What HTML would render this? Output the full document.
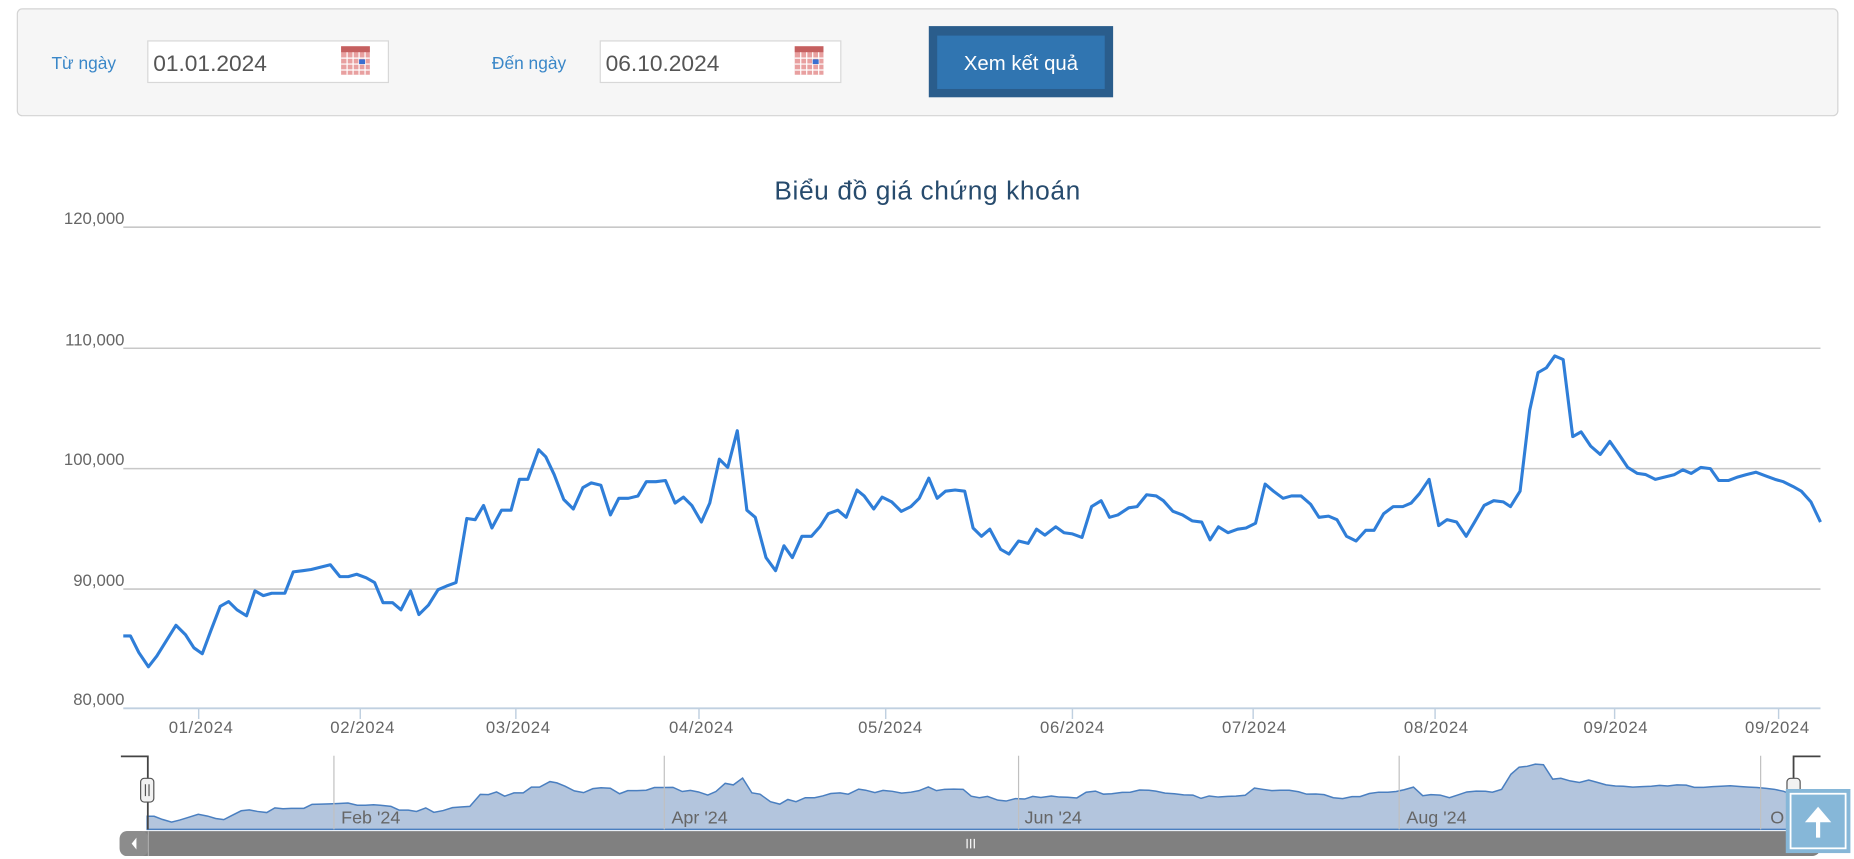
<!DOCTYPE html>
<html><head><meta charset="utf-8"><style>
html,body{margin:0;padding:0;background:#fff;width:1854px;height:859px;overflow:hidden}
svg{display:block}
text{font-family:"Liberation Sans","DejaVu Sans",sans-serif}
</style></head><body>
<svg width="1854" height="859" viewBox="0 0 1549 724" preserveAspectRatio="none" xmlns="http://www.w3.org/2000/svg">
<!-- form panel -->
<rect x="14.5" y="7.5" width="1521" height="90" rx="4" fill="#f6f6f6" stroke="#d4d4d4"/>
<text x="43" y="58" font-size="14.5" fill="#3a87c8">Từ ngày</text>
<rect x="123.5" y="34.5" width="201" height="35" fill="#fff" stroke="#d8d8d8"/>
<text x="128" y="60" font-size="19" fill="#555">01.01.2024</text>
<g transform="translate(285,39)"><rect width="24" height="24" fill="#e8a0a0"/><rect width="24" height="5" fill="#c56060"/>
<path d="M0 10H24M0 15H24M0 20H24M5 5V24M10 5V24M15 5V24M20 5V24" stroke="#fff" stroke-width="1"/><rect x="15" y="11" width="5" height="4" fill="#3a6fd0"/></g>
<text x="411" y="58" font-size="14.5" fill="#3a87c8">Đến ngày</text>
<rect x="501.5" y="34.5" width="201" height="35" fill="#fff" stroke="#d8d8d8"/>
<text x="506" y="60" font-size="19" fill="#555">06.10.2024</text>
<g transform="translate(664,39)"><rect width="24" height="24" fill="#e8a0a0"/><rect width="24" height="5" fill="#c56060"/>
<path d="M0 10H24M0 15H24M0 20H24M5 5V24M10 5V24M15 5V24M20 5V24" stroke="#fff" stroke-width="1"/><rect x="15" y="11" width="5" height="4" fill="#3a6fd0"/></g>
<rect x="776" y="22" width="154" height="60" fill="#2a5d8c"/>
<rect x="783" y="30" width="140" height="45" fill="#3075b1"/>
<text x="853" y="59" font-size="17" fill="#fff" text-anchor="middle">Xem kết quả</text>

<!-- title -->
<text x="775" y="168" font-size="22" fill="#274b6d" text-anchor="middle" letter-spacing="0.5">Biểu đồ giá chứng khoán</text>

<!-- grid -->
<g stroke="#c8c8c8" stroke-width="1.3">
<path d="M103 191.5H1521M103 293.5H1521M103 395H1521M103 496.5H1521"/>
</g>
<path d="M103 597H1521" stroke="#c0d0e0" stroke-width="1.5"/>
<g stroke="#c0d0e0" stroke-width="1.2"><path d="M166 597v9M301 597v9M431 597v9M584 597v9M740 597v9M896 597v9M1047 597v9M1199 597v9M1349 597v9M1486 597v9"/></g>
<g font-size="14" fill="#666" text-anchor="end">
<text x="104" y="189">120,000</text><text x="104" y="291">110,000</text><text x="104" y="392">100,000</text><text x="104" y="494">90,000</text><text x="104" y="594">80,000</text>
</g>
<g font-size="14" fill="#666" text-anchor="middle" letter-spacing="0.5">
<text x="168" y="618">01/2024</text><text x="303" y="618">02/2024</text><text x="433" y="618">03/2024</text><text x="586" y="618">04/2024</text><text x="744" y="618">05/2024</text><text x="896" y="618">06/2024</text><text x="1048" y="618">07/2024</text><text x="1200" y="618">08/2024</text><text x="1350" y="618">09/2024</text><text x="1485" y="618">09/2024</text>
</g>

<polyline fill="none" stroke="#2f7ed8" stroke-width="2.6" stroke-linejoin="round" points="103,536 109,536 116,550 124,562 131,553 139,540 147,527 155,535 162,546 169,551 176,532 184,511 191,507 198,514 206,519 213,498 220,502 227,500 238,500 245,482 253,481 260,480 268,478 276,476 284,486 291,486 298,484 306,487 313,491 320,508 328,508 335,514 343,498 350,518 358,510 366,497 373,494 381,491 390,437 397,438 404,426 411,445 419,430 427,430 434,404 441,404 450,379 456,385 463,400 471,421 479,429 487,411 494,407 502,409 510,434 517,420 525,420 533,418 540,406 548,406 556,405 564,424 571,419 578,426 586,440 593,424 601,387 608,394 616,363 624,430 631,436 640,470 648,481 655,460 662,470 670,452 678,452 685,444 692,433 700,430 707,436 716,413 722,418 730,429 737,419 745,423 753,431 761,427 768,420 776,403 783,420 790,414 798,413 806,414 813,445 820,452 827,446 836,463 843,467 851,456 859,458 866,446 873,451 882,444 889,449 896,450 904,453 912,427 920,422 927,436 934,434 943,428 950,427 958,417 966,418 972,422 980,431 988,434 996,439 1004,440 1011,455 1018,444 1026,449 1034,446 1041,445 1049,441 1057,408 1064,414 1072,420 1079,418 1087,418 1095,425 1102,436 1110,435 1117,438 1125,452 1133,456 1141,447 1148,447 1156,433 1164,427 1172,427 1179,424 1186,416 1194,404 1202,443 1209,438 1217,440 1225,452 1232,440 1240,426 1248,422 1256,423 1262,427 1270,414 1278,346 1285,314 1292,310 1299,300 1306,303 1314,368 1321,364 1329,376 1337,383 1345,372 1352,382 1360,394 1368,399 1375,400 1383,404 1391,402 1399,400 1406,396 1413,399 1421,394 1429,395 1436,405 1444,405 1452,402 1459,400 1467,398 1475,401 1483,404 1490,406 1498,410 1505,414 1513,423 1521,440"/>

<!-- navigator -->
<g transform="translate(23.1,588.1) scale(0.9697,0.1864)">
<polygon fill="#b3c5dd" stroke="#4a7fc0" stroke-width="1.5" vector-effect="non-scaling-stroke" points="103,595 103,536 109,536 116,550 124,562 131,553 139,540 147,527 155,535 162,546 169,551 176,532 184,511 191,507 198,514 206,519 213,498 220,502 227,500 238,500 245,482 253,481 260,480 268,478 276,476 284,486 291,486 298,484 306,487 313,491 320,508 328,508 335,514 343,498 350,518 358,510 366,497 373,494 381,491 390,437 397,438 404,426 411,445 419,430 427,430 434,404 441,404 450,379 456,385 463,400 471,421 479,429 487,411 494,407 502,409 510,434 517,420 525,420 533,418 540,406 548,406 556,405 564,424 571,419 578,426 586,440 593,424 601,387 608,394 616,363 624,430 631,436 640,470 648,481 655,460 662,470 670,452 678,452 685,444 692,433 700,430 707,436 716,413 722,418 730,429 737,419 745,423 753,431 761,427 768,420 776,403 783,420 790,414 798,413 806,414 813,445 820,452 827,446 836,463 843,467 851,456 859,458 866,446 873,451 882,444 889,449 896,450 904,453 912,427 920,422 927,436 934,434 943,428 950,427 958,417 966,418 972,422 980,431 988,434 996,439 1004,440 1011,455 1018,444 1026,449 1034,446 1041,445 1049,441 1057,408 1064,414 1072,420 1079,418 1087,418 1095,425 1102,436 1110,435 1117,438 1125,452 1133,456 1141,447 1148,447 1156,433 1164,427 1172,427 1179,424 1186,416 1194,404 1202,443 1209,438 1217,440 1225,452 1232,440 1240,426 1248,422 1256,423 1262,427 1270,414 1278,346 1285,314 1292,310 1299,300 1306,303 1314,368 1321,364 1329,376 1337,383 1345,372 1352,382 1360,394 1368,399 1375,400 1383,404 1391,402 1399,400 1406,396 1413,399 1421,394 1429,395 1436,405 1444,405 1452,402 1459,400 1467,398 1475,401 1483,404 1490,406 1498,410 1505,414 1513,423 1521,440 1521,595"/>
</g>
<g stroke="#c0c0c0" stroke-width="1"><path d="M279 637V699M555 637V699M851 637V699M1169 637V699M1471 637V699"/></g>
<g font-size="15" fill="#666"><text x="285" y="694">Feb '24</text><text x="561" y="694">Apr '24</text><text x="856" y="694">Jun '24</text><text x="1175" y="694">Aug '24</text><text x="1479" y="694">O</text></g>
<path d="M101 637.5H123.5V699M1498.5 699V637.5H1521" fill="none" stroke="#444" stroke-width="1.5"/>
<rect x="117.5" y="656" width="11" height="20" rx="3" fill="#f2f2f2" stroke="#555"/>
<path d="M121.5 661v10M124.5 661v10" stroke="#555"/>
<rect x="1493" y="656" width="11" height="20" rx="3" fill="#f2f2f2" stroke="#555"/>
<!-- scrollbar -->
<rect x="100" y="700.5" width="1421" height="21" rx="7" fill="#808080"/>
<rect x="100" y="700.5" width="24" height="21" rx="6" fill="#8c8c8c"/>
<path d="M124 700.5V721.5" stroke="#aaa"/>
<path d="M114 706v10l-4-5z" fill="#fff"/>
<path d="M808 707v8M811 707v8M814 707v8" stroke="#fff" stroke-width="1"/>
<!-- back to top -->
<rect x="1492" y="665" width="54" height="54" fill="#86b7d8"/>
<rect x="1496" y="669" width="46" height="46" fill="none" stroke="#fff" stroke-width="1.5"/>
<path d="M1519 706V684" stroke="#fff" stroke-width="3.5"/>
<path d="M1508 693L1519 680L1530 693Z" fill="#fff"/>
</svg>
</body></html>
